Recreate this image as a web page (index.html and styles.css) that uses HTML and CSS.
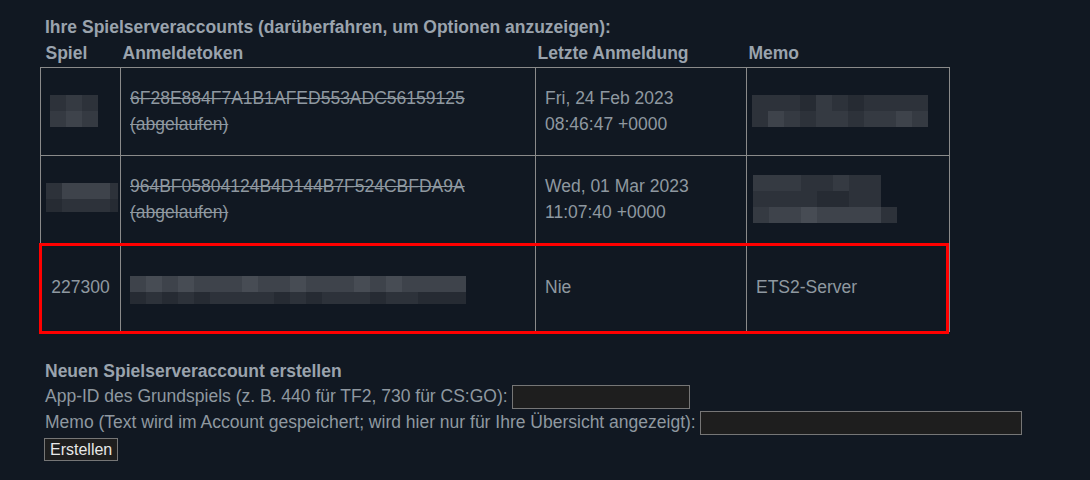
FILE: index.html
```html
<!DOCTYPE html>
<html lang="de">
<head>
<meta charset="utf-8">
<title>Spielserveraccounts</title>
<link rel="stylesheet" href="styles.css">
</head>
<body>
<div class="page">
  <div class="title">Ihre Spielserveraccounts (darüberfahren, um Optionen anzuzeigen):</div>
  <div class="table-wrap">
    <table class="accounts">
      <colgroup>
        <col class="w-game">
        <col class="w-token">
        <col class="w-date">
        <col class="w-memo">
      </colgroup>
      <thead>
        <tr>
          <th class="c-game">Spiel</th>
          <th class="c-token">Anmeldetoken</th>
          <th class="c-date">Letzte Anmeldung</th>
          <th class="c-memo">Memo</th>
        </tr>
      </thead>
      <tbody>
        <tr>
          <td class="c-game">
            <div class="blur cols3 shift-left">
              <span class="s2"></span><span class="s3"></span><span class="s2"></span>
              <span class="s3"></span><span class="s4"></span><span class="s3"></span>
            </div>
          </td>
          <td class="c-token"><s>6F28E884F7A1B1AFED553ADC56159125<br>(abgelaufen)</s></td>
          <td class="c-date">Fri, 24 Feb 2023<br>08:46:47 +0000</td>
          <td class="c-memo">
            <div class="blur cols11 memo1">
              <span class="s2"></span><span class="s2"></span><span class="s2"></span><span class="s1"></span><span class="s3"></span><span class="s2"></span><span class="s1"></span><span class="s2"></span><span class="s2"></span><span class="s2"></span><span class="s2"></span>
              <span class="s2"></span><span class="s4"></span><span class="s3"></span><span class="s2"></span><span class="s3"></span><span class="s3"></span><span class="s2"></span><span class="s3"></span><span class="s3"></span><span class="s4"></span><span class="s3"></span>
            </div>
          </td>
        </tr>
        <tr>
          <td class="c-game">
            <div class="blur game2">
              <span class="s2"></span><span class="s4"></span><span class="s4"></span><span class="s4"></span><span class="s2 half"></span>
              <span class="s1 short"></span><span class="s2 short"></span><span class="s2 short"></span><span class="s2 short"></span><span class="s1 half short"></span>
            </div>
          </td>
          <td class="c-token"><s>964BF05804124B4D144B7F524CBFDA9A<br>(abgelaufen)</s></td>
          <td class="c-date">Wed, 01 Mar 2023<br>11:07:40 +0000</td>
          <td class="c-memo">
            <div class="blur memo2">
              <span class="s3"></span><span class="s3"></span><span class="s3"></span><span class="s2"></span><span class="s2"></span><span class="s3"></span><span class="s2"></span><span class="s2"></span><span class="gap"></span>
              <span class="s2"></span><span class="s2"></span><span class="s2"></span><span class="s2"></span><span class="s1"></span><span class="s1"></span><span class="s2"></span><span class="s2"></span><span class="gap"></span>
              <span class="s3"></span><span class="s4"></span><span class="s4"></span><span class="s5"></span><span class="s4"></span><span class="s4"></span><span class="s4"></span><span class="s4"></span><span class="s2"></span>
            </div>
          </td>
        </tr>
        <tr class="row-new">
          <td class="c-game">227300</td>
          <td class="c-token">
            <div class="blur token3">
              <span class="s4"></span><span class="s5"></span><span class="s4"></span><span class="s5"></span><span class="s4"></span><span class="s4"></span><span class="s4"></span><span class="s5"></span><span class="s4"></span><span class="s4"></span><span class="s5"></span><span class="s4"></span><span class="s4"></span><span class="s4"></span><span class="s5"></span><span class="s4"></span><span class="s5"></span><span class="s4"></span><span class="s4"></span><span class="s4"></span><span class="s4"></span>
              <span class="s1 short"></span><span class="s2 short"></span><span class="s1 short"></span><span class="s2 short"></span><span class="s1 short"></span><span class="s2 short"></span><span class="s2 short"></span><span class="s2 short"></span><span class="s2 short"></span><span class="s1 short"></span><span class="s2 short"></span><span class="s1 short"></span><span class="s2 short"></span><span class="s2 short"></span><span class="s2 short"></span><span class="s1 short"></span><span class="s2 short"></span><span class="s2 short"></span><span class="s1 short"></span><span class="s1 short"></span><span class="s1 short"></span>
            </div>
          </td>
          <td class="c-date">Nie</td>
          <td class="c-memo">ETS2-Server</td>
        </tr>
      </tbody>
    </table>
    <div class="highlight"></div>
  </div>

  <div class="create">
    <div class="create-title">Neuen Spielserveraccount erstellen</div>
    <div class="field">
      <label for="appid">App-ID des Grundspiels (z. B. 440 für TF2, 730 für CS:GO):</label>
      <input id="appid" class="input-appid" type="text">
    </div>
    <div class="field">
      <label for="memo">Memo (Text wird im Account gespeichert; wird hier nur für Ihre Übersicht angezeigt):</label>
      <input id="memo" class="input-memo" type="text">
    </div>
    <button class="btn" type="button">Erstellen</button>
  </div>
</div>
</body>
</html>
```

FILE: styles.css
```css
html, body {
  margin: 0;
  padding: 0;
  background: #111822;
}

body {
  font-family: "Liberation Sans", Arial, sans-serif;
  font-size: 17.5px;
  color: #8f98a0;
}

.page {
  padding: 17px 0 0 40px;
}

.title {
  font-weight: bold;
  color: #9aa3ad;
  line-height: 20px;
  padding-left: 5px;
}

.table-wrap {
  position: relative;
  width: 909px;
}

.accounts {
  border-collapse: collapse;
  table-layout: fixed;
  width: 909px;
}

.w-game { width: 80px; }
.w-token { width: 415px; }
.w-date { width: 211px; }
.w-memo { width: 203px; }

.accounts th {
  text-align: left;
  font-weight: bold;
  color: #9aa3ad;
  height: 30px;
  line-height: 20px;
  padding: 6px 0 0 2px;
  vertical-align: top;
  box-sizing: border-box;
}

.accounts th.c-game { padding-left: 5px; }

.accounts td {
  border: 1px solid #8a8a8a;
  height: 88px;
  padding: 0 9px;
  line-height: 26px;
  vertical-align: middle;
  box-sizing: border-box;
}

.accounts td.c-game {
  text-align: center;
  padding: 0 4px;
}

.accounts s {
  text-decoration-thickness: 1px;
}

.blur {
  display: grid;
  grid-auto-rows: 16px;
}

.blur span { display: block; }

.blur .short { height: 13px; }
.token3 .short { height: 12px; }

.cols3 { grid-template-columns: repeat(3, 16px); width: 48px; margin: 0 auto; }
.shift-left { position: relative; left: -7px; }

.game2 {
  grid-template-columns: repeat(4, 16px) 8px;
  width: 72px;
  margin: 0 0 0 1px;
}

.token3 {
  grid-template-columns: repeat(21, 16px);
  grid-template-rows: 16px 12px;
  margin-top: 6px;
}

.cols11 { grid-template-columns: repeat(11, 16px); }
.memo1 { margin-left: -4px; }

.memo2 {
  grid-template-columns: repeat(9, 16px);
  margin-left: -3px;
}

.s1 { background: #262b33; }
.s2 { background: #2d323a; }
.s3 { background: #353a42; }
.s4 { background: #3e434b; }
.s5 { background: #474c54; }
.gap { background: transparent; }

.highlight {
  position: absolute;
  left: -1px;
  bottom: -2px;
  width: 910px;
  height: 91px;
  border: 3px solid #ff0000;
  box-sizing: border-box;
  pointer-events: none;
}

.create {
  padding: 26px 0 0 5px;
}

.create-title {
  font-weight: bold;
  color: #9aa3ad;
  line-height: 26px;
}

.field {
  display: flex;
  align-items: center;
  gap: 4px;
  height: 26px;
}

.field input {
  height: 24px;
  box-sizing: border-box;
  background: #1e1e1e;
  border: 1px solid #767676;
  padding: 0 4px;
  color: #e0e0e0;
  font-family: "Liberation Sans", Arial, sans-serif;
  font-size: 14px;
  margin: 0;
}

.input-appid { width: 178px; }
.input-memo { width: 322px; }

.btn {
  margin: 2px 0 0 -1px;
  height: 23px;
  padding: 0 5px;
  background: #1e1e1e;
  border: 1px solid #767676;
  color: #e8e8e8;
  font-family: "Liberation Sans", Arial, sans-serif;
  font-size: 16px;
  line-height: 21px;
}
```
